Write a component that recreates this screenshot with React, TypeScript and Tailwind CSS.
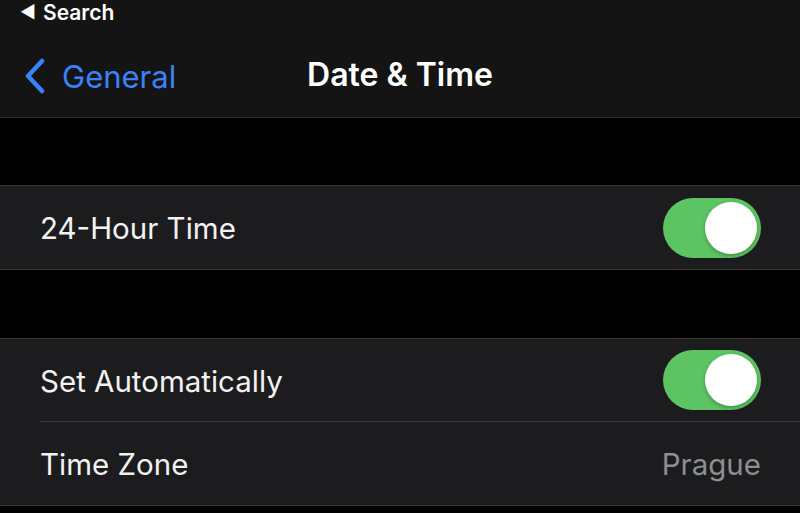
const font = { fontFamily: '"Inter", "Liberation Sans", sans-serif' }

const Toggle = () => (
  <div className="w-[98px] h-[60px] rounded-full bg-[#5cc462] p-[4px] flex justify-end">
    <div className="w-[52px] h-[52px] rounded-full bg-white shadow-[0_2px_4px_rgba(0,0,0,0.25)]" />
  </div>
)

const Row = ({ label, right, last }: { label: string; right: React.ReactNode; last?: boolean }) => (
  <div className="pl-[40px] bg-[#1c1c1e]">
    <div className={`h-[83px] pr-[39px] flex items-center justify-between ${last ? "" : "border-b border-[#38383a]"}`}>
      <span className="text-[29.5px] text-[#f2f2f2] pt-[2px]">{label}</span>
      {right}
    </div>
  </div>
)

export default function App() {
  return (
    <div className="w-[800px] h-[513px] bg-black overflow-hidden" style={font}>
      <div className="h-[118px] bg-[#141414] border-b border-[#2a2a2a] flex flex-col">
        <div className="h-[26px] pl-[20px] flex items-center gap-[7px] text-white text-[21px] font-semibold">
          <span className="text-[17px]">◀</span>
          <span>Search</span>
        </div>
        <div className="relative flex-1 flex items-center justify-center pt-[7px]">
          <div className="absolute left-[24px] top-[32px] flex items-center gap-[16px] text-[#3a82f7]">
            <svg width="22" height="36" viewBox="0 0 22 36" fill="none">
              <path d="M18 3 L4 18 L18 33" stroke="#3a82f7" strokeWidth="4.5" strokeLinecap="round" strokeLinejoin="round" />
            </svg>
            <span className="text-[31px] leading-none">General</span>
          </div>
          <span className="text-white text-[32px] font-semibold">Date &amp; Time</span>
        </div>
      </div>
      <div className="h-[67px]" />
      <div className="border-y border-[#38383a]">
        <Row label="24-Hour Time" right={<Toggle />} last />
      </div>
      <div className="h-[68px]" />
      <div className="border-y border-[#38383a]">
        <Row label="Set Automatically" right={<Toggle />} />
        <Row label="Time Zone" right={<span className="text-[29.5px] text-[#8e8e93] pt-[2px]">Prague</span>} last />
      </div>
    </div>
  )
}
